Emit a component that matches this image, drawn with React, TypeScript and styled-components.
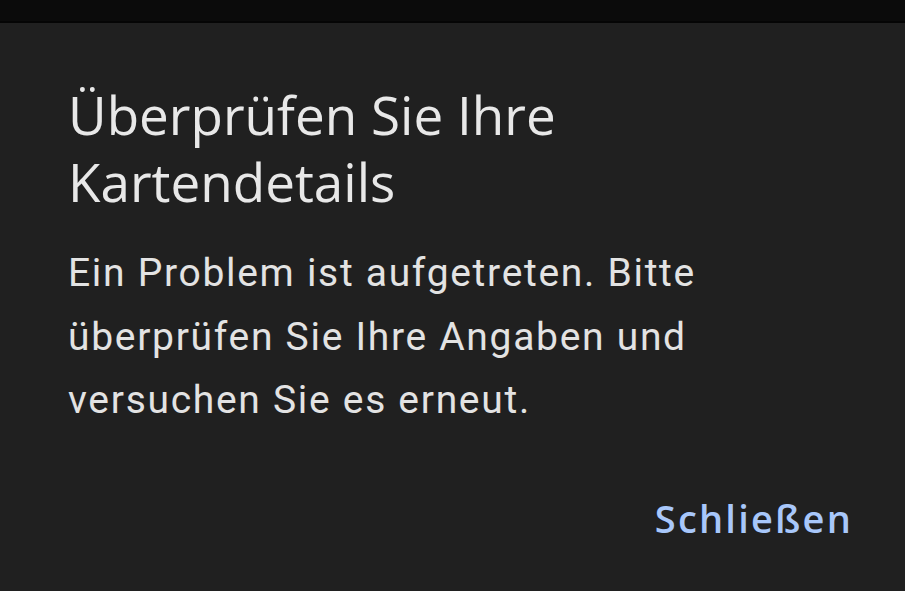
import styled, {createGlobalStyle} from "styled-components";

const GlobalStyle = createGlobalStyle`
  html, body {
    margin: 0;
    padding: 0;
    background: #202020;
  }
  #root {
    min-height: 100vh;
  }
`;

const Page = styled.div`
  display: flex;
  flex-direction: column;
  height: 591px;
  background: #202020;
`;

const StatusBar = styled.div`
  height: 21px;
  background: #0b0b0b;
  border-bottom: 2px solid #050505;
`;

const Dialog = styled.div`
  flex: 1;
  display: flex;
  flex-direction: column;
  padding: 58px 52px 0 68px;
`;

const Title = styled.h2`
  margin: 0;
  font-family: "Open Sans", sans-serif;
  font-weight: 400;
  font-size: 53px;
  line-height: 67px;
  color: #e8e8e8;
`;

const Message = styled.p`
  margin: 27px 0 0;
  font-family: Roboto, sans-serif;
  font-size: 39px;
  line-height: 63.5px;
  letter-spacing: 1.7px;
  color: #e3e3e3;
`;

const Actions = styled.div`
  display: flex;
  justify-content: flex-end;
  margin-top: 60px;
`;

const TextButton = styled.button`
  border: none;
  background: none;
  padding: 0;
  font-family: "Open Sans", sans-serif;
  font-weight: 600;
  font-size: 38px;
  line-height: 50px;
  letter-spacing: 2.2px;
  color: #a8c7fa;
  cursor: pointer;
`;

export default function App() {
  return (
    <>
      <GlobalStyle />
      <Page>
        <StatusBar />
        <Dialog>
          <Title>
            Überprüfen Sie Ihre
            <br />
            Kartendetails
          </Title>
          <Message>
            Ein Problem ist aufgetreten. Bitte
            <br />
            überprüfen Sie Ihre Angaben und
            <br />
            versuchen Sie es erneut.
          </Message>
          <Actions>
            <TextButton>Schließen</TextButton>
          </Actions>
        </Dialog>
      </Page>
    </>
  );
}
